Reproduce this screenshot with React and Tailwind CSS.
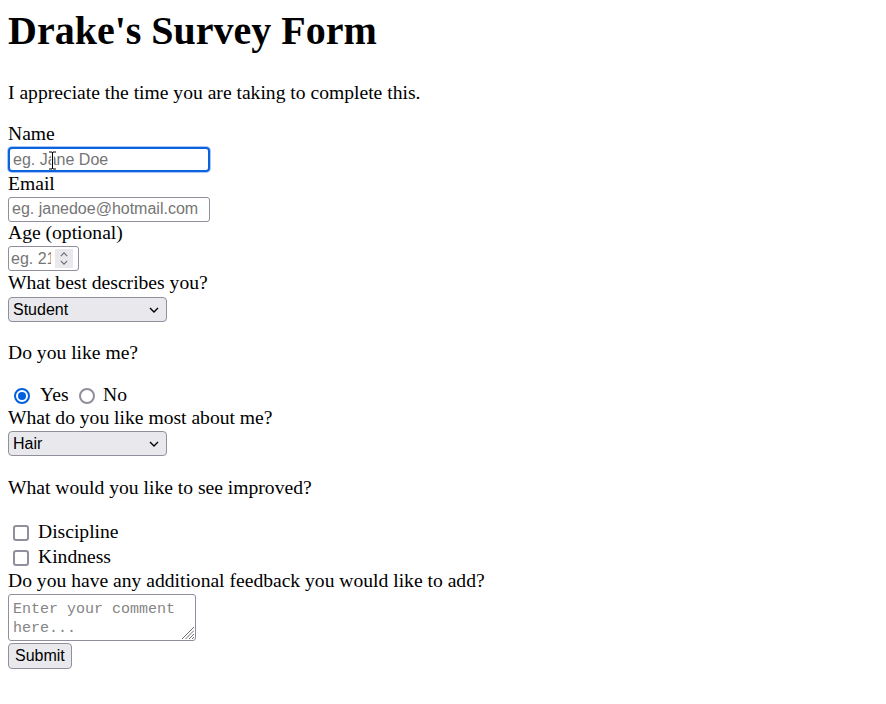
const sans = "font-['Liberation_Sans',Arial,sans-serif]";
const mono = "font-['Liberation_Mono','DejaVu_Sans_Mono',monospace]";

function Chevron({ up = false, color = '#000', w = 10, h = 6 }) {
    return (
        <svg width={w} height={h} viewBox="0 0 10 6" className="block shrink-0">
            <path d={up ? 'M1 5l4-4 4 4' : 'M1 1l4 4 4-4'} fill="none" stroke={color} strokeWidth="1.4" />
        </svg>
    );
}

function Select({ options, className = '' }) {
    return (
        <div className={`relative w-[159px] ${className}`}>
            <select
                className={`block h-[25px] w-full appearance-none rounded-[4px] border border-[#8f8f9d] bg-[#e9e9ed] pl-[4px] text-[16px] leading-[normal] text-black ${sans}`}
                defaultValue={options[0]}
            >
                {options.map(o => <option key={o}>{o}</option>)}
            </select>
            <span className="pointer-events-none absolute right-[8px] top-[10px]">
                <Chevron />
            </span>
        </div>
    );
}

function Radio({ checked }) {
    return checked ? (
        <span className="flex h-4 w-4 shrink-0 items-center justify-center rounded-full border-2 border-[#0060df] bg-white">
            <span className="h-2 w-2 rounded-full bg-[#0060df]" />
        </span>
    ) : (
        <span className="block h-4 w-4 shrink-0 rounded-full border-2 border-[#8f8f9d] bg-white" />
    );
}

function Checkbox() {
    return <span className="ml-[5px] block h-4 w-4 shrink-0 rounded-[3px] border-2 border-[#8f8f9d] bg-white" />;
}

export default function App() {
    const textCls = `block h-[25px] bg-white pl-[3px] text-[16px] leading-[normal] outline-none placeholder:text-[#757575] ${sans}`;

    return (
        <div className="min-h-screen bg-white px-2 pt-2 font-['Liberation_Serif','Times_New_Roman',serif] text-[19.6px] leading-[22.5px] text-black">
            <h1 className="text-[40px] font-bold leading-[46px]">Drake's Survey Form</h1>
            <p className="mt-[28px]">I appreciate the time you are taking to complete this.</p>

            <form onSubmit={e => e.preventDefault()} className="mt-[18.5px]">
                <label className="block" htmlFor="name">Name</label>
                <div className="relative mb-[0.5px] mt-[1.5px] w-[202px]">
                    <input
                        id="name"
                        type="text"
                        placeholder="eg. Jane Doe"
                        className={`${textCls} w-full rounded-[4px] border-2 border-[#0b63de] pl-[2px] shadow-[0_0_0_1px_#a8c7f4]`}
                    />
                    {/* mouse text cursor */}
                    <svg width="9" height="19" viewBox="0 0 9 19" className="pointer-events-none absolute left-[40px] top-[4px]">
                        <path d="M1 1h3l0.5 1 0.5-1h3M4.5 2v15M1 18h3l0.5-1 0.5 1h3" fill="none" stroke="#fff" strokeWidth="2.5" />
                        <path d="M1 1h3l0.5 1 0.5-1h3M4.5 2v15M1 18h3l0.5-1 0.5 1h3" fill="none" stroke="#000" strokeWidth="1" />
                    </svg>
                </div>

                <label className="block" htmlFor="email">Email</label>
                <input
                    id="email"
                    type="email"
                    placeholder="eg. janedoe@hotmail.com"
                    className={`${textCls} mb-[0.5px] mt-[1.5px] w-[202px] rounded-[3px] border border-[#8f8f9d]`}
                />

                <label className="block" htmlFor="age">Age (optional)</label>
                <div className="mb-[0.5px] mt-[1.5px] flex h-[25px] w-[71px] items-center rounded-[3px] border border-[#8f8f9d] bg-white pr-[5px]">
                    <input
                        id="age"
                        type="text"
                        placeholder="eg. 21"
                        className={`mr-[4px] h-full min-w-0 flex-1 bg-transparent pl-[2px] text-[16px] leading-[normal] outline-none placeholder:text-[#757575] ${sans}`}
                    />
                    <span className="flex h-[19px] w-[18px] shrink-0 flex-col items-center justify-center gap-[3px] bg-[#e9e9ed]">
                        <Chevron up color="#6b6b75" w={8} h={5} />
                        <Chevron color="#6b6b75" w={8} h={5} />
                    </span>
                </div>

                <label className="block">What best describes you?</label>
                <Select className="mt-[2.5px]" options={['Student', 'Full Time Job', 'Prefer not to say', 'Other']} />

                <p className="mt-[20.5px]">Do you like me?</p>
                <div className="mt-[20px] flex h-[22px] items-center">
                    <label className="ml-[6px] flex items-center">
                        <Radio checked />
                        <span className="ml-[10px]">Yes</span>
                    </label>
                    <label className="ml-[10.5px] flex items-center">
                        <Radio />
                        <span className="ml-[8px]">No</span>
                    </label>
                </div>

                <label className="block">What do you like most about me?</label>
                <Select className="mt-[2px]" options={['Hair', 'Personality', 'Smile', 'Style']} />

                <p className="mt-[21px]">What would you like to see improved?</p>
                <div className="mt-[20.5px]">
                    <label className="flex h-[25px] items-center">
                        <Checkbox />
                        <span className="ml-[9px]">Discipline</span>
                    </label>
                    <label className="flex h-[25px] items-center">
                        <Checkbox />
                        <span className="ml-[9px]">Kindness</span>
                    </label>
                </div>

                <label className="block" htmlFor="comment">Do you have any additional feedback you would like to add?</label>
                <div className="relative mt-[1.5px] w-[188px]">
                    <textarea
                        id="comment"
                        placeholder="Enter your comment here..."
                        className={`block h-[47px] w-full resize-none rounded-[3px] border border-[#8f8f9d] bg-white px-[4px] pt-[5px] text-[15px] leading-[19px] placeholder:text-[#858585] ${mono}`}
                    />
                    <svg width="14" height="14" viewBox="0 0 14 14" className="pointer-events-none absolute bottom-[2px] right-[2px]">
                        <path d="M2 14L14 2M5.5 14L14 5.5M9 14L14 9M12 14L14 12" stroke="#707070" strokeWidth="1" />
                    </svg>
                </div>

                <button
                    type="submit"
                    className={`mt-[2px] block h-[26px] rounded-[4px] border border-[#8f8f9d] bg-[#e9e9ed] px-[6px] text-[16px] leading-[normal] ${sans}`}
                >
                    Submit
                </button>
            </form>
        </div>
    );
}
